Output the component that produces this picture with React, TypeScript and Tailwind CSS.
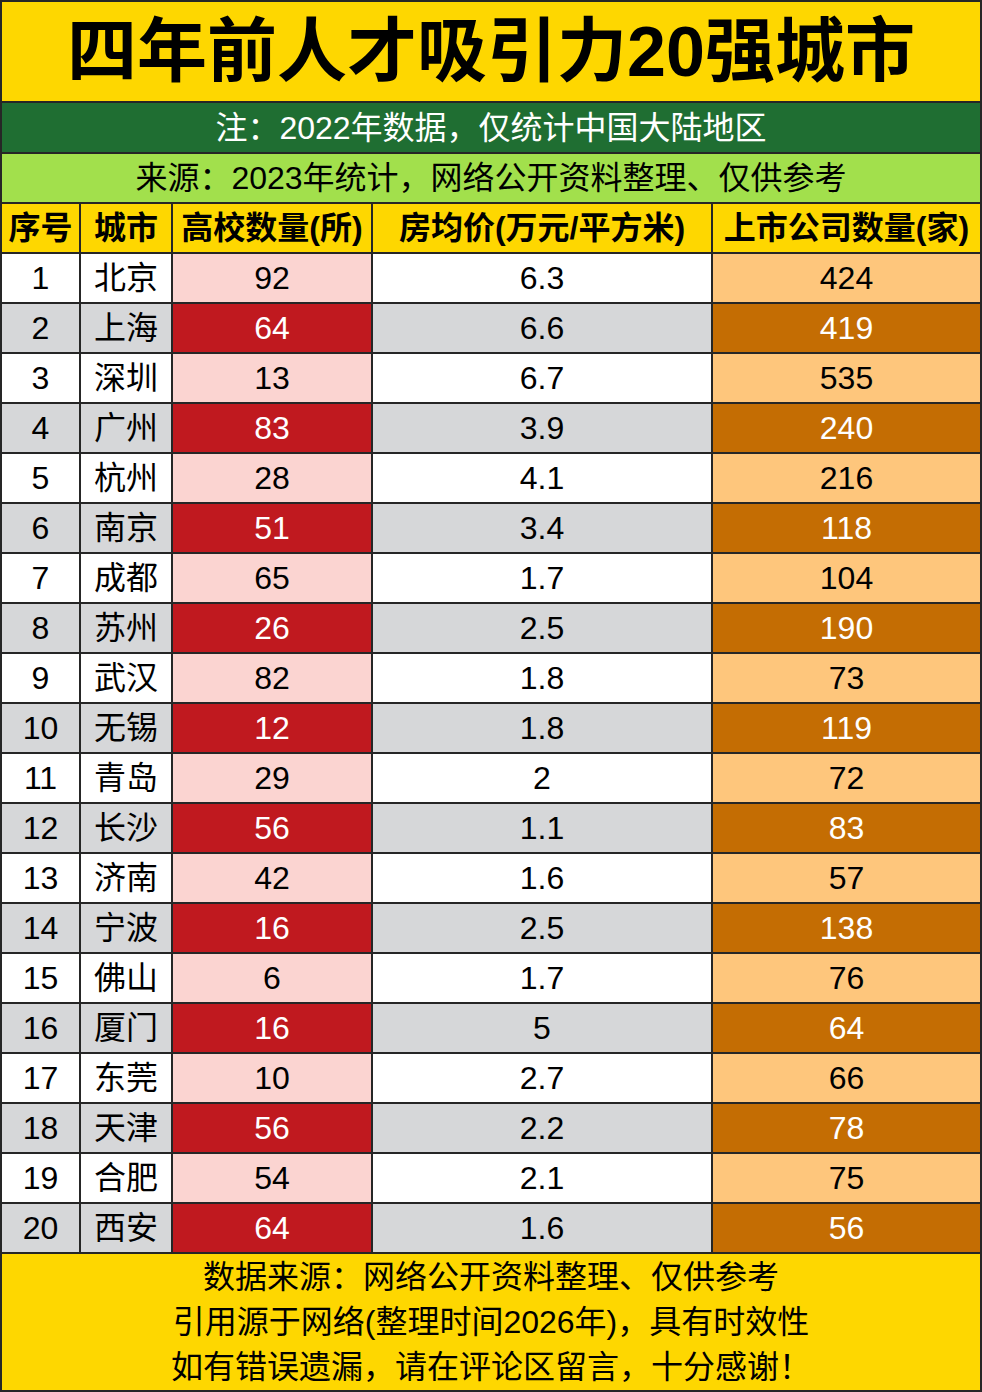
import React from "react";

const rows: [string, string, string, string][] = [
  ["北京", "92", "6.3", "424"],
  ["上海", "64", "6.6", "419"],
  ["深圳", "13", "6.7", "535"],
  ["广州", "83", "3.9", "240"],
  ["杭州", "28", "4.1", "216"],
  ["南京", "51", "3.4", "118"],
  ["成都", "65", "1.7", "104"],
  ["苏州", "26", "2.5", "190"],
  ["武汉", "82", "1.8", "73"],
  ["无锡", "12", "1.8", "119"],
  ["青岛", "29", "2", "72"],
  ["长沙", "56", "1.1", "83"],
  ["济南", "42", "1.6", "57"],
  ["宁波", "16", "2.5", "138"],
  ["佛山", "6", "1.7", "76"],
  ["厦门", "16", "5", "64"],
  ["东莞", "10", "2.7", "66"],
  ["天津", "56", "2.2", "78"],
  ["合肥", "54", "2.1", "75"],
  ["西安", "64", "1.6", "56"],
];

const font = { fontFamily: '"Liberation Sans", "Noto Sans CJK SC", sans-serif' };

export default function App() {
  return (
    <div
      className="w-[982px] h-[1392px] bg-[#262626] p-[2px] flex flex-col gap-[2px] text-black"
      style={font}
    >
      <div className="h-[99px] bg-[#fed700] flex items-center justify-center text-[70px] font-bold leading-none">
        四年前人才吸引力20强城市
      </div>
      <div className="h-[49px] bg-[#1f6e32] flex items-center justify-center text-white text-[32px] leading-none">
        注：2022年数据，仅统计中国大陆地区
      </div>
      <div className="h-[48px] bg-[#a2e04c] flex items-center justify-center text-[32px] leading-none">
        来源：2023年统计，网络公开资料整理、仅供参考
      </div>
      <div className="h-[48px] grid grid-cols-[77px_90px_198px_338px_267px] gap-[2px] text-[32px] font-bold leading-none">
        <div className="bg-[#fed700] flex items-center justify-center">序号</div>
        <div className="bg-[#fed700] flex items-center justify-center">城市</div>
        <div className="bg-[#fed700] flex items-center justify-center">高校数量(所)</div>
        <div className="bg-[#fed700] flex items-center justify-center">房均价(万元/平方米)</div>
        <div className="bg-[#fed700] flex items-center justify-center">上市公司数量(家)</div>
      </div>
      {rows.map((r, i) => {
        const even = i % 2 === 1;
        const base = even ? "bg-[#d6d7d9]" : "bg-white";
        return (
          <div
            key={i}
            className="h-[48px] grid grid-cols-[77px_90px_198px_338px_267px] gap-[2px] text-[32px] leading-none"
          >
            <div className={`${base} flex items-center justify-center`}>{i + 1}</div>
            <div className={`${base} flex items-center justify-center`}>{r[0]}</div>
            <div
              className={`${even ? "bg-[#c0191f] text-white" : "bg-[#fbd4d1]"} flex items-center justify-center`}
            >
              {r[1]}
            </div>
            <div className={`${base} flex items-center justify-center`}>{r[2]}</div>
            <div
              className={`${even ? "bg-[#c46d03] text-white" : "bg-[#fec67c]"} flex items-center justify-center`}
            >
              {r[3]}
            </div>
          </div>
        );
      })}
      <div className="h-[136px] bg-[#fed700] flex flex-col items-center justify-center text-[32px] leading-[45px]">
        <div>数据来源：网络公开资料整理、仅供参考</div>
        <div>引用源于网络(整理时间2026年)，具有时效性</div>
        <div>如有错误遗漏，请在评论区留言，十分感谢！</div>
      </div>
    </div>
  );
}
